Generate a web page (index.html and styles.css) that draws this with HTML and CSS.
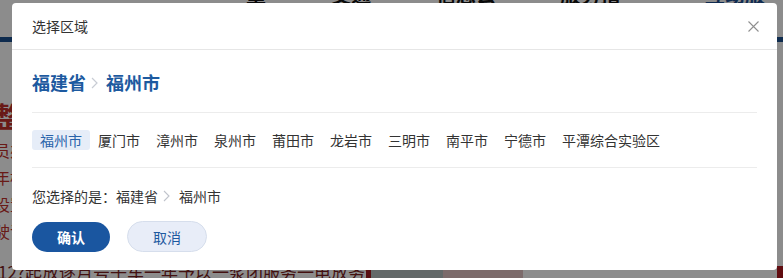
FILE: index.html
```html
<!DOCTYPE html>
<html lang="zh-CN">
<head>
<meta charset="utf-8">
<title>选择区域</title>
<link rel="stylesheet" href="styles.css">
</head>
<body>
<div class="page">
  <div class="topnav">
    <span class="nav-item">重要</span>
    <span class="nav-item">交通出</span>
    <span class="nav-item">信息公开</span>
    <span class="nav-item">服务指南</span>
    <span class="nav-item nav-blue">互动服务</span>
  </div>
  <div class="bluebar"></div>
  <div class="content">
    <div class="red-col">
      <div class="red-big">整</div>
      <div class="red-line">员办</div>
      <div class="red-line">年检</div>
      <div class="red-line">设置</div>
      <div class="red-line">驶证</div>
    </div>
  </div>
  <div class="bottom-row">
    <span class="bottom-text">12?起放逐月号子车一年予以一浆团服务一电放务动一年予一法我服</span>
    <span class="bottom-blocks">
      <span class="blk blk-red"></span>
      <span class="blk blk-teal"></span>
      <span class="blk blk-pink"></span>
      <span class="blk blk-gap"></span>
      <span class="blk blk-edge"></span>
    </span>
  </div>
</div>
<div class="mask"></div>
<div class="modal">
  <div class="modal-header">
    <span class="modal-title">选择区域</span>
    <svg class="close" width="11" height="11" viewBox="0 0 11 11"><path d="M0.5 0.5 L10.5 10.5 M10.5 0.5 L0.5 10.5" stroke="#8f8f8f" stroke-width="1.1" fill="none"/></svg>
  </div>
  <div class="modal-body">
    <div class="province">
      <span>福建省</span>
      <svg class="chev chev-big" width="7" height="12" viewBox="0 0 7 12"><path d="M1 1 L6 6 L1 11" stroke="#c8ccd4" stroke-width="1.2" fill="none"/></svg>
      <span>福州市</span>
    </div>
    <div class="cities">
      <span class="city active">福州市</span>
      <span class="city">厦门市</span>
      <span class="city">漳州市</span>
      <span class="city">泉州市</span>
      <span class="city">莆田市</span>
      <span class="city">龙岩市</span>
      <span class="city">三明市</span>
      <span class="city">南平市</span>
      <span class="city">宁德市</span>
      <span class="city">平潭综合实验区</span>
    </div>
    <div class="chosen">
      <span>您选择的是：福建省</span>
      <svg class="chev chev-small" width="7" height="12" viewBox="0 0 7 12"><path d="M1 1 L6 6 L1 11" stroke="#c0c4cc" stroke-width="1.1" fill="none"/></svg>
      <span>福州市</span>
    </div>
    <div class="actions">
      <button class="btn btn-primary">确认</button>
      <button class="btn btn-cancel">取消</button>
    </div>
  </div>
</div>
</body>
</html>
```
FILE: styles.css
```css
* { box-sizing: border-box; }
html, body {
  margin: 0;
  padding: 0;
  width: 783px;
  height: 278px;
  overflow: hidden;
  font-family: "Noto Sans CJK SC", "Noto Sans", sans-serif;
  background: #ffffff;
}
.page {
  width: 783px;
  height: 278px;
  background: #ffffff;
  display: flex;
  flex-direction: column;
}
.topnav {
  height: 37px;
  display: flex;
  gap: 46px;
  padding-left: 246px;
  margin-top: -16px;
  font-size: 20px;
  font-weight: bold;
  color: #111;
  line-height: 22px;
}
.nav-blue { color: #1d4f93; margin-left: 20px; }
.topnav + .bluebar { margin-top: 16px; }
.bluebar {
  height: 5px;
  background: #1b4f8f;
}
.content {
  flex: 1;
  display: flex;
}
.red-col {
  padding-top: 57px;
  color: #c0302a;
  margin-left: -6px;
}
.red-big {
  font-size: 28px;
  font-weight: bold;
  line-height: 34px;
  margin-bottom: 4px;
}
.red-line {
  font-size: 16px;
  line-height: 27px;
}
.bottom-row {
  height: 12px;
  display: flex;
  align-items: flex-start;
}
.bottom-text {
  font-size: 17px;
  line-height: 12px;
  color: #7a1e1e;
  white-space: nowrap;
  width: 368px;
  overflow: hidden;
  margin-left: -2px;
}
.bottom-blocks { display: flex; height: 12px; flex: 1; }
.blk { display: block; height: 12px; }
.blk-red { width: 5px; background: #a01a1f; }
.blk-teal { width: 72px; background: #b4c0c0; }
.blk-pink { width: 80px; background: #e2c4c4; }
.blk-gap { flex: 1; background: #ffffff; }
.blk-edge { width: 6px; background: #b0141c; }

.mask {
  position: absolute;
  inset: 0;
  background: rgba(0, 0, 0, 0.45);
}
.modal {
  position: absolute;
  left: 12px;
  top: 3px;
  width: 765px;
  height: 267px;
  background: #ffffff;
  border-radius: 4px;
  display: flex;
  flex-direction: column;
}
.modal-header {
  height: 47px;
  border-bottom: 1px solid #e6e6e6;
  display: flex;
  align-items: center;
  justify-content: space-between;
  padding: 0 18px 0 20px;
}
.modal-title {
  font-size: 14px;
  color: #333333;
  line-height: 20px;
}
.close { display: block; margin-top: 1px; }
.modal-body {
  padding: 0 20px;
}
.province {
  height: 63px;
  border-bottom: 1px solid #ececec;
  display: flex;
  align-items: center;
  padding-top: 2px;
  font-size: 18px;
  font-weight: bold;
  color: #1d5aa0;
}
.chev { display: block; }
.chev-big { margin: 1px 8px 0 5px; }
.cities {
  height: 55px;
  border-bottom: 1px solid #ececec;
  display: flex;
  align-items: center;
  padding-bottom: 1px;
}
.city {
  height: 20px;
  line-height: 20px;
  padding: 0 8px;
  font-size: 14px;
  color: #333333;
  border-radius: 3px;
  white-space: nowrap;
}
.city.active {
  background: #e6edf8;
  color: #2a64aa;
}
.chosen {
  margin-top: 18px;
  height: 20px;
  display: flex;
  align-items: center;
  font-size: 14px;
  line-height: 20px;
  color: #333333;
}
.chev-small { margin: 0 9px 0 5px; }
.actions {
  margin-top: 15px;
  display: flex;
  align-items: center;
  gap: 17px;
}
.btn {
  font-family: "Noto Sans CJK SC", "Noto Sans", sans-serif;
  font-size: 14px;
  border-radius: 16px;
  cursor: pointer;
  padding: 0;
}
.btn-primary {
  width: 78px;
  height: 30px;
  background: #1a56a0;
  color: #ffffff;
  border: none;
  font-weight: bold;
}
.btn-cancel {
  width: 80px;
  height: 31px;
  background: #e8edf8;
  color: #1d5aa0;
  border: 1px solid #d6deec;
}
```
